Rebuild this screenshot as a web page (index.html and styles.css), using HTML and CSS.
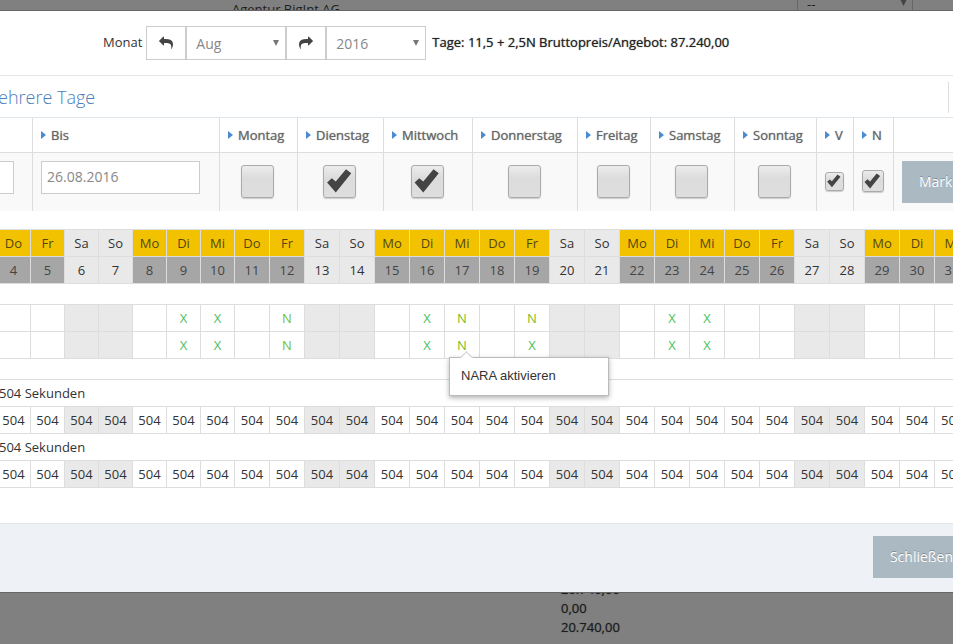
FILE: index.html
```html
<!DOCTYPE html>
<html lang="de">
<head>
<meta charset="utf-8">
<title>Mehrere Tage</title>
<link rel="stylesheet" href="styles.css">
</head>
<body>
<div class="behind behind-top">
  <span class="behind-name">Agentur BigInt AG</span>
  <span class="behind-select">-- <svg class="arrow" viewBox="0 0 8 8" aria-hidden="true"><path d="M0 0h8L4 8z"/></svg></span>
</div>

<main class="modal">
  <header class="toolbar">
    <label for="month">Monat</label>
    <div class="group">
      <button class="step" type="button" aria-label="Vorheriger Monat">
        <svg class="icon flip" viewBox="0 0 1792 1792"><path d="M1792 640q0 26-19 45l-512 512q-19 19-45 19t-45-19-19-45v-256h-224q-98 0-175.500 6t-154 21.500-133 42.500-105.500 69.500-80 101-48.500 138.500-17.500 181q0 55 5 123 0 6 2.500 23.500t2.500 26.500q0 15-8.500 25t-23.500 10q-16 0-28-17-7-9-13-22t-13.500-30-10.500-24q-127-285-127-451 0-199 53-333 162-403 875-403h224v-256q0-26 19-45t45-19 45 19l512 512q19 19 19 45z"/></svg>
      </button>
      <span class="picker">
        <select id="month"><option>Aug</option></select>
        <svg class="arrow" viewBox="0 0 8 8" aria-hidden="true"><path d="M0 0h8L4 8z"/></svg>
      </span>
      <button class="step" type="button" aria-label="Nächster Monat">
        <svg class="icon" viewBox="0 0 1792 1792"><path d="M1792 640q0 26-19 45l-512 512q-19 19-45 19t-45-19-19-45v-256h-224q-98 0-175.500 6t-154 21.500-133 42.500-105.500 69.500-80 101-48.500 138.500-17.500 181q0 55 5 123 0 6 2.500 23.500t2.500 26.500q0 15-8.500 25t-23.500 10q-16 0-28-17-7-9-13-22t-13.500-30-10.500-24q-127-285-127-451 0-199 53-333 162-403 875-403h224v-256q0-26 19-45t45-19 45 19l512 512q19 19 19 45z"/></svg>
      </button>
      <span class="picker">
        <select id="year" aria-label="Jahr"><option>2016</option></select>
        <svg class="arrow" viewBox="0 0 8 8" aria-hidden="true"><path d="M0 0h8L4 8z"/></svg>
      </span>
    </div>
    <strong class="summary">Tage: 11,5 + 2,5N Bruttopreis/Angebot: 87.240,00</strong>
  </header>

  <div class="title-bar">
    <h1>ehrere Tage</h1>
    <span class="tool"></span>
  </div>

  <table class="filter">
    <colgroup>
      <col class="c-from"><col class="c-to"><col class="c-mo"><col class="c-di"><col class="c-mi"><col class="c-do">
      <col class="c-fr"><col class="c-sa"><col class="c-so"><col class="c-v"><col class="c-n"><col>
    </colgroup>
    <thead>
      <tr>
        <th></th>
        <th><label for="to">Bis</label></th>
        <th><label for="mo">Montag</label></th>
        <th><label for="di">Dienstag</label></th>
        <th><label for="mi">Mittwoch</label></th>
        <th><label for="do">Donnerstag</label></th>
        <th><label for="fr">Freitag</label></th>
        <th><label for="sa">Samstag</label></th>
        <th><label for="so">Sonntag</label></th>
        <th><label for="v">V</label></th>
        <th><label for="n">N</label></th>
        <th></th>
      </tr>
    </thead>
    <tbody>
      <tr>
        <td class="date from"><input type="text" aria-label="Von"></td>
        <td class="date"><input id="to" type="text" value="26.08.2016"></td>
        <td><input id="mo" type="checkbox"></td>
        <td><input id="di" type="checkbox" checked></td>
        <td><input id="mi" type="checkbox" checked></td>
        <td><input id="do" type="checkbox"></td>
        <td><input id="fr" type="checkbox"></td>
        <td><input id="sa" type="checkbox"></td>
        <td><input id="so" type="checkbox"></td>
        <td><input id="v" class="small" type="checkbox" checked></td>
        <td><input id="n" class="medium" type="checkbox" checked></td>
        <td class="action"><button class="btn" type="button">Markieren</button></td>
      </tr>
    </tbody>
  </table>

  <table class="days" id="calendar"></table>
  <table class="days" id="bookings"></table>
  <table class="days" id="seconds"></table>

  <footer class="footer">
    <button class="btn" type="button">Schließen</button>
  </footer>
</main>

<div class="behind behind-bottom">
  <div>20.740,00</div>
  <div>0,00</div>
  <div>20.740,00</div>
</div>
<script src="script.js"></script>
</body>
</html>
```
FILE: styles.css
```css
* { box-sizing: border-box; }

body {
  margin: 0;
  min-height: 100vh;
  overflow: hidden;
  background: #808080;
  color: #333;
  font: 13px/19px "Open Sans", sans-serif;
}

button, input, select { font-family: inherit; font-size: 14px; margin: 0; }

.behind { color: #1c1c1c; overflow: hidden; }

.behind-top {
  display: flex;
  justify-content: space-between;
  height: 10px;
  padding: 0 40px 0 232px;
}

.behind-select {
  display: flex;
  justify-content: space-between;
  width: 116px;
  padding: 0 5px 0 9px;
  border: solid #666;
  border-width: 0 1px;
  line-height: 8px;
}

.behind-select .arrow { margin-top: -1px; fill: #444; }

.behind-bottom { padding-left: 561px; text-shadow: 0 0 1px rgba(28, 28, 28, 0.6); }
.behind-bottom div:first-child { margin-top: -13px; }

.modal {
  position: relative;
  background: #fff;
  border: solid #666;
  border-width: 1px 0;
}

.toolbar {
  display: flex;
  align-items: center;
  height: 65px;
  padding: 0 0 2px 103px;
  border-bottom: 1px solid #e5e5e5;
}

.group { display: flex; margin: 2px 6px 0 4px; }

.step {
  width: 40px;
  height: 34px;
  padding: 0;
  background: #fff;
  border: 1px solid #ccc;
}

.icon { display: block; width: 14px; height: 14px; margin: 0 auto; fill: #444; }
.flip { transform: scaleX(-1); }

.picker { position: relative; width: 100px; }

.picker select {
  display: block;
  width: 100%;
  height: 34px;
  padding: 0 9px;
  appearance: none;
  background: #fff;
  border: 1px solid #ccc;
  border-radius: 0;
  color: #888;
}

.arrow { width: 7px; height: 7px; fill: #777; }
.picker .arrow { position: absolute; right: 7px; top: 14px; width: 6px; height: 6px; pointer-events: none; }

.summary {
  font-weight: 400;
  color: #222;
  text-shadow: 0 0 1px rgba(34, 34, 34, 0.7);
}

.title-bar {
  display: flex;
  justify-content: space-between;
  height: 41px;
  margin-left: -2px;
  padding: 6px 4px 4px 0;
}

.title-bar h1 {
  margin: 0;
  color: #4b80bc;
  font-size: 18px;
  font-weight: 300;
  line-height: 30px;
}

.tool { border-left: 1px solid #ddd; }

.filter {
  width: 100%;
  min-width: 994px;
  table-layout: fixed;
  border-spacing: 0;
  border-top: 1px solid #dfe5ec;
}

.c-from { width: 33px; }
.c-to { width: 187px; }
.c-mo { width: 78px; }
.c-di { width: 86px; }
.c-mi { width: 89px; }
.c-do { width: 105px; }
.c-fr { width: 73px; }
.c-sa { width: 84px; }
.c-so { width: 82px; }
.c-v { width: 37px; }
.c-n { width: 40px; }

.filter th, .filter td { border-right: 1px solid #ddd; }

.filter th {
  height: 35px;
  padding: 0 0 0 8px;
  border-bottom: 1px solid #ddd;
  color: #666;
  font-weight: 400;
  text-align: left;
  text-shadow: 0 0 1px rgba(102, 102, 102, 0.8);
  white-space: nowrap;
}

.filter label { display: flex; align-items: center; }

.filter label::before {
  content: "";
  margin-right: 6px;
  border: solid transparent;
  border-width: 4px 0 4px 5px;
  border-left-color: #4b8bd2;
  margin-right: 5px;
}

.filter td {
  height: 58px;
  padding: 0 2px 2px 0;
  background: #f9f9f9;
  text-align: center;
  vertical-align: middle;
}

.filter .date { padding: 8px 0 0 8px; text-align: left; vertical-align: top; }
.filter .from { padding-left: 0; }

.date input {
  display: block;
  width: 159px;
  height: 33px;
  padding: 0 5px 2px;
  border: 1px solid #ccc;
  color: #888;
}

.from input { width: 14px; padding: 0; border-left: 0; }

.filter .action { padding: 8px 0 0 8px; text-align: left; vertical-align: top; }

input[type="checkbox"] {
  display: block;
  width: 33px;
  height: 33px;
  margin: 0 auto;
  appearance: none;
  background: linear-gradient(#ececec, #dcdcdc 40%, #dedede);
  border: 1px solid #aaa;
  border-radius: 3px;
  box-shadow: 0 1px 1px #ccc;
}

input.small { width: 19px; height: 19px; }
input.medium { width: 22px; height: 22px; }

input[type="checkbox"]:checked::before {
  content: "";
  display: block;
  width: 100%;
  height: 100%;
  background: #444;
  clip-path: polygon(10% 55%, 25% 41%, 38% 52%, 71% 12%, 88% 25%, 38% 87%);
}

.btn {
  height: 42px;
  padding: 0 17px 1px;
  background: #abb9c3;
  border: 0;
  color: #fff;
  text-shadow: 0 -1px 0 rgba(0, 0, 0, 0.25);
}

.days {
  width: 973px;
  margin: 18px 0 0 -3px;
  table-layout: fixed;
  border-spacing: 0;
  border-top: 1px solid #ddd;
}

#bookings, #seconds { margin-top: 20px; }

.w34 { width: 34px; }
.w35 { width: 35px; }

.days th, .days td {
  position: relative;
  height: 27px;
  padding: 0;
  border: solid #ddd;
  border-width: 0 1px 1px 0;
  font-weight: 400;
  text-align: center;
}

.days .weekday { background: #f2c200; color: #544712; }
.days .date-no { background: #a6a6a6; color: #444; }
.days .off { background: #e9e9e9; }
.days .x { color: #4cc060; }
.days .n { color: #78c01f; }
.days .caption { padding-left: 2px; text-align: left; }

.tip {
  position: absolute;
  z-index: 1;
  left: 4px;
  top: 25px;
  width: 160px;
  padding: 8px 11px 10px;
  background: #fff;
  border: 1px solid #bbb;
  box-shadow: 0 2px 5px rgba(0, 0, 0, 0.3);
  color: #333;
  font-family: "Liberation Sans", Arial, sans-serif;
  font-size: 13px;
  text-align: left;
}

.tip::before {
  content: "";
  position: absolute;
  left: 12px;
  top: -5px;
  width: 8px;
  height: 8px;
  background: #fff;
  border: solid #ccc;
  border-width: 1px 0 0 1px;
  transform: rotate(45deg);
}

.footer {
  display: flex;
  justify-content: flex-end;
  height: 69px;
  margin-top: 35px;
  padding-top: 12px;
  background: #eef1f6;
  border-top: 1px solid #e0e5ea;
}

.footer .btn { margin-right: -17px; }
```
FILE: script.js
```js
const names = ["So", "Mo", "Di", "Mi", "Do", "Fr", "Sa"];
const days = [];
for (let d = 4; d <= 31; d++) days.push(d);

const weekday = d => new Date(2016, 7, d).getDay();
const isOff = d => weekday(d) === 0 || weekday(d) === 6;
const off = d => (isOff(d) ? "off" : "");
const row = cell => "<tr>" + days.map(cell).join("") + "</tr>";
const cols = "<colgroup>" +
  days.map(d => `<col class="${d < 11 ? "w34" : "w35"}">`).join("") + "</colgroup>";

document.getElementById("calendar").innerHTML = cols +
  row(d => `<th class="${off(d) || "weekday"}">${names[weekday(d)]}</th>`) +
  row(d => `<th class="${off(d) || "date-no"}">${d}</th>`);

const bookings = [
  { 9: "X", 10: "X", 12: "N", 16: "X", 17: "N", 19: "N", 23: "X", 24: "X" },
  { 9: "X", 10: "X", 12: "N", 16: "X", 17: "N", 19: "X", 23: "X", 24: "X" }
];
document.getElementById("bookings").innerHTML = cols + bookings.map((b, i) =>
  row(d => {
    const mark = b[d] || "";
    const tip = i === 1 && d === 17 ? '<div class="tip" role="tooltip">NARA aktivieren</div>' : "";
    return `<td class="${off(d)} ${mark.toLowerCase()}">${mark}${tip}</td>`;
  })).join("");

const caption = `<tr><td class="caption" colspan="${days.length}">504 Sekunden</td></tr>`;
const seconds = row(d => `<td class="${off(d)}">504</td>`);
document.getElementById("seconds").innerHTML = cols + caption + seconds + caption + seconds;
```
